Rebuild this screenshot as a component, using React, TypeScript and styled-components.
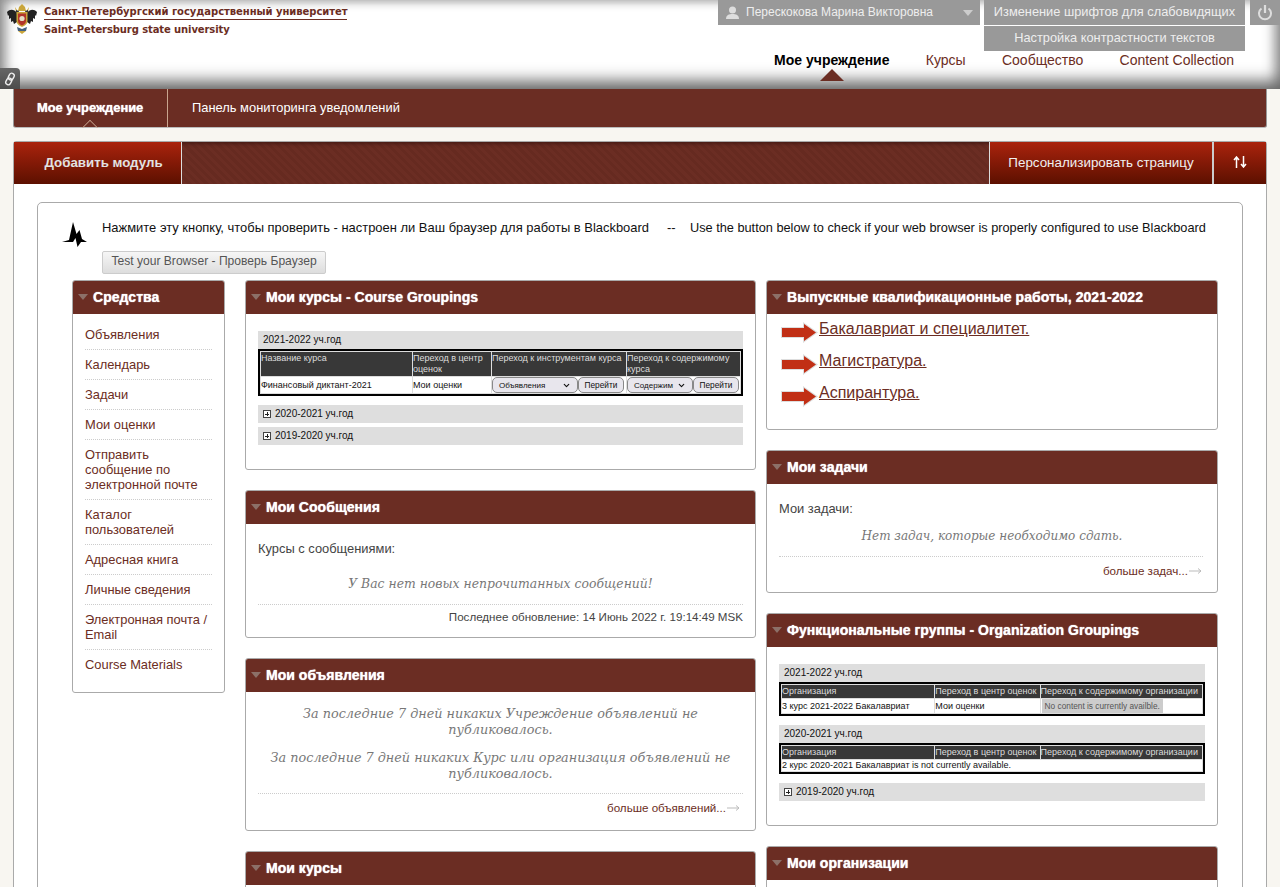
import React from 'react'
import styled, { createGlobalStyle } from 'styled-components'
import { ChevronDown } from 'lucide-react'

const GlobalStyle = createGlobalStyle`
  html, body {
    margin: 0;
    padding: 0;
    height: 887px;
    overflow: hidden;
    background-color: #eeebe4;
    font-family: "Liberation Sans", Arial, sans-serif;
  }

  * {
    box-sizing: border-box;
  }
`

const BRAND = '#6b2d23'

const Page = styled.div`
  width: 1280px;
  height: 887px;
  overflow: hidden;
  background-color: #eeebe4;
  background-image:
    linear-gradient(#f8f6f1, #f8f6f1),
    linear-gradient(#f8f6f1, #f8f6f1);
  background-size: 15px 15px;
  background-position: 3px 6px, 6px 3px;
  background-repeat: repeat;
`

const Header = styled.header`
  position: relative;
  height: 89px;
  display: flex;
  justify-content: space-between;
  background: #fff;
  box-shadow: inset 0 -16px 16px -8px #666, inset 14px 0 12px -8px #999, inset -14px 0 12px -8px #999, inset 0 8px 10px -6px #aaa;
`

const Brand = styled.div`
  display: flex;
  align-items: flex-start;
  padding: 3px 0 0 6px;
  gap: 6px;
`

const BrandText = styled.div`
  color: ${BRAND};
  font-family: "DejaVu Sans", sans-serif;
  font-weight: 700;
  font-size: 10px;
  white-space: nowrap;
  margin-top: 2px;
`

const BrandRu = styled.div`
  width: 303px;
  height: 15px;
  line-height: 11px;
  padding-top: 1px;
  border-bottom: 1px solid ${BRAND};
  letter-spacing: -0.04px;
`

const BrandEn = styled.div`
  line-height: 13px;
  padding-top: 3px;
  letter-spacing: -0.1px;
`

const HeaderRight = styled.div`
  display: flex;
  flex-direction: column;
  align-items: flex-end;
`

const TopRow = styled.div`
  display: flex;
`

const UserMenu = styled.div`
  width: 262px;
  height: 25px;
  background: #999;
  color: #eee;
  font-size: 12px;
  display: flex;
  align-items: center;
  padding: 0 7px;
  margin-right: 4px;
`

const UserName = styled.span`
  flex: 1;
  margin-left: 6px;
  margin-top: -2px;
`

const MenuArrow = styled.span`
  width: 0;
  height: 0;
  border-left: 5px solid transparent;
  border-right: 5px solid transparent;
  border-top: 6px solid #ccc;
`

const FontStack = styled.div`
  width: 261px;
  display: flex;
  flex-direction: column;
  gap: 1px;
`

const GreyButton = styled.div`
  height: 25px;
  background: #999;
  color: #eee;
  font-size: 12.8px;
  line-height: 24px;
  text-align: center;
`

const Power = styled.div`
  width: 30px;
  height: 25px;
  margin-left: 5px;
  background: #999;
  display: flex;
  justify-content: center;
  align-items: center;
`

const TopNav = styled.nav`
  display: flex;
  gap: 36.3px;
  padding: 1px 46px 0 0;
`

const NavLink = styled.a<{ $active?: boolean }>`
  position: relative;
  font-size: 14px;
  line-height: 17px;
  font-weight: ${(p) => (p.$active ? 700 : 400)};
  color: ${(p) => (p.$active ? '#000' : BRAND)};

  ${(p) =>
    p.$active &&
    `
    &::after {
      content: '';
      position: absolute;
      left: 46px;
      top: 17px;
      border-left: 12px solid transparent;
      border-right: 12px solid transparent;
      border-bottom: 12px solid ${BRAND};
    }
  `}
`

const LinkTab = styled.div`
  position: absolute;
  left: 0;
  bottom: 0;
  width: 20px;
  height: 21px;
  background: linear-gradient(#666, #4c4c4c);
  border-radius: 0 4px 0 0;
  display: flex;
  align-items: center;
  justify-content: center;
`

const SubNav = styled.div`
  margin: 0 13px;
  height: 39px;
  background: ${BRAND};
  border-left: 1px solid #999;
  border-right: 1px solid #999;
  border-bottom: 1px solid #bbb;
  display: flex;
  border-radius: 0 0 3px 3px;
`

const SubTab = styled.div<{ $active?: boolean }>`
  position: relative;
  height: 38px;
  line-height: 38px;
  padding: 0 24px 0 ${(p) => (p.$active ? '23px' : '24px')};
  color: #fff;
  font-size: 12.9px;
  white-space: nowrap;
  font-weight: ${(p) => (p.$active ? 700 : 400)};
  border-right: ${(p) => (p.$active ? '1px solid #c9a58f' : 'none')};
  ${(p) => p.$active && 'width: 154px; text-shadow: 0 0 1px #fff;'}

  ${(p) =>
    p.$active &&
    `
    &::after {
      content: '';
      position: absolute;
      left: 70px;
      bottom: -7px;
      width: 11px;
      height: 11px;
      border-left: 1px solid #c9a58f;
      border-top: 1px solid #c9a58f;
      transform: rotate(45deg);
      clip-path: polygon(0 0, 100% 0, 0 100%);
    }
  `}
`

const Panel = styled.div`
  margin: 13px 13px 0;
  border: 1px solid #aaa;
  border-radius: 3px 3px 0 0;
  background: #fff;
  height: 760px;
`

const ActionBar = styled.div`
  height: 42px;
  display: flex;
  justify-content: space-between;
  background: repeating-linear-gradient(45deg, #6b2d23 0 3px, #662a20 3px 6px);
  box-shadow: inset 0 4px 4px -3px #3a1510;
`

const RedButton = styled.div<{ $width: number }>`
  width: ${(p) => p.$width}px;
  height: 42px;
  padding-bottom: 2px;
  color: #f0f0f0;
  font-size: 13.4px;
  background: linear-gradient(#aa230d, #5c1000);
  display: flex;
  align-items: center;
  justify-content: center;
`

const AddButton = styled(RedButton)`
  border-right: 1px solid #ddd;
  font-size: 13.3px;
  font-weight: 700;
  color: #e2e2e2;
  padding-left: 12px;
`

const ActionRight = styled.div`
  display: flex;
`

const PersonalButton = styled(RedButton)`
  border-left: 1px solid #ddd;
`

const SortButton = styled(RedButton)`
  border-left: 2px solid #ccc;
`

const Content = styled.div`
  padding: 18px 23px 0;
`

const Box = styled.div`
  border: 1px solid #aaa;
  border-radius: 5px;
  height: 700px;
  padding: 0 24px 0 34px;
`

const Notice = styled.div`
  display: flex;
  gap: 14px;
  padding-top: 18px;
  margin-left: -10px;
`

const NoticeIcon = styled.div`
  padding-top: 1px;
  width: 26px;
`

const NoticeBody = styled.div`
  font-size: 12.95px;
  color: #111;
`

const NoticeText = styled.div`
  line-height: 14px;
  white-space: nowrap;
`

const NoticeEnglish = styled.span`
  font-size: 12.75px;
`

const TestButton = styled.div`
  margin-top: 16px;
  width: 224px;
  height: 23px;
  line-height: 19px;
  border: 1px solid #ccc;
  border-radius: 2px;
  background: linear-gradient(#f6f6f6, #ddd);
  color: #555;
  font-size: 12.1px;
  text-align: center;
`

const Columns = styled.div`
  display: flex;
  align-items: flex-start;
  margin-top: 6px;
`

const Column = styled.div<{ $width: number; $gap: number }>`
  width: ${(p) => p.$width}px;
  margin-right: ${(p) => p.$gap}px;
  display: flex;
  flex-direction: column;
  gap: 20px;
`

const Module = styled.section<{ $height: number }>`
  height: ${(p) => p.$height}px;
  border: 1px solid #aaa;
  border-radius: 3px;
  background: #fff;
  overflow: hidden;
`

const ModuleHead = styled.h2`
  margin: 0;
  height: 33px;
  background: ${BRAND};
  color: #fff;
  font-size: 14px;
  letter-spacing: 0.04px;
  display: flex;
  align-items: center;
  padding: 0 0 2px 5px;
  gap: 5px;
  white-space: nowrap;
  text-shadow: 0 0 1px #fff;
`

const HeadArrow = styled.span`
  width: 0;
  height: 0;
  margin-top: 1px;
  border-left: 5.5px solid transparent;
  border-right: 5.5px solid transparent;
  border-top: 6px solid #8c7068;
`

const ToolList = styled.div`
  padding-top: 6px;
`

const ToolItem = styled.a`
  display: block;
  margin: 0 12px;
  padding: 7px 0;
  font-size: 12.9px;
  line-height: 15px;
  color: ${BRAND};
  border-bottom: 1px dotted #ccc;

  &:last-child {
    border-bottom: 0;
  }
`

const ModuleBody = styled.div<{ $top: number; $side?: number }>`
  padding: ${(p) => p.$top}px ${(p) => p.$side ?? 12}px 0;
`

const YearBar = styled.div`
  height: 18px;
  line-height: 18px;
  background: #dedede;
  color: #111;
  font-size: 10px;
  padding-left: 5px;
  display: flex;
  align-items: center;
  gap: 4px;
`

const Plus = styled.span`
  width: 8px;
  height: 8px;
  border: 1px solid #444;
  background: linear-gradient(#222, #222) center / 4px 1px no-repeat, linear-gradient(#222, #222) center / 1px 4px no-repeat, #fff;
`

const SpacedYear = styled(YearBar)`
  margin-top: 9px;
`

const CollapsedYear = styled(YearBar)`
  margin-top: 4px;
`

const GroupTable = styled.table`
  width: 100%;
  table-layout: fixed;
  border-collapse: separate;
  border-spacing: 1px;
  border: 2px solid #000;
  background: #ddd;
  font-size: 9px;
  color: #111;

  th {
    background: #383838;
    color: #ddd;
    font-weight: 400;
    text-align: left;
    vertical-align: top;
    padding: 1px 0;
    line-height: 11px;
  }

  td {
    background: #fff;
    padding: 0;
    line-height: 11px;
    white-space: nowrap;
    overflow: hidden;
  }
`

const ControlCell = styled.div`
  display: flex;
`

const SelectBox = styled.span<{ $width: number }>`
  width: ${(p) => p.$width}px;
  height: 16px;
  border: 1px solid #888;
  border-radius: 5px;
  background: #e8e6ed;
  display: flex;
  align-items: center;
  justify-content: space-between;
  padding: 0 6px;
  font-size: 8px;
`

const GoButton = styled.span`
  width: 46px;
  height: 16px;
  border: 1px solid #888;
  border-radius: 5px;
  background: #e8e6ed;
  text-align: center;
  line-height: 14px;
  font-size: 8.3px;
`

const GreyNote = styled.span`
  display: inline-block;
  vertical-align: top;
  background: #ccc;
  color: #555;
  font-size: 8.3px;
  line-height: 14px;
  padding: 0 3px;
  margin-left: 1px;
`

const Label = styled.div`
  font-size: 12.9px;
  line-height: 15px;
  color: #444;
`

const EmptyText = styled.p<{ $size: number; $top?: number }>`
  margin: ${(p) => p.$top ?? 0}px 0 0;
  text-align: center;
  font-family: "DejaVu Serif", serif;
  font-style: italic;
  font-size: ${(p) => p.$size}px;
  line-height: 16px;
  color: #777;
`

const Footer = styled.div<{ $top?: number; $inset?: number; $end?: number }>`
  margin-top: ${(p) => p.$top ?? 12}px;
  margin-right: ${(p) => p.$inset ?? 0}px;
  padding: 4px ${(p) => p.$end ?? 0}px 0 0;
  border-top: 1px dotted #ccc;
  text-align: right;
`

const UpdateLine = styled(Footer)`
  font-size: 11.6px;
  line-height: 15px;
  color: #444;
`

const MoreLink = styled.a`
  display: inline-flex;
  align-items: center;
  color: ${BRAND};
  font-size: 11.6px;
  line-height: 15px;
`

const ArrowRow = styled.div`
  display: flex;
  align-items: flex-start;
  height: 32px;
`

const ArrowIcon = styled.div`
  margin: 2px 1px 0 14px;
  height: 21px;
`

const ArrowLink = styled.a`
  display: block;
  font-size: 16px;
  line-height: 18px;
  color: ${BRAND};
  text-decoration: underline;
`

const RedArrow = () => (
  <svg width="37" height="21" viewBox="0 0 37 21">
    <path d="M0 5h22V0l15 10.500L22 21v-5H0z" fill="#ddd" />
    <path d="M1 6h22V2l12 8.500L23 19v-4H1z" fill="#c12f15" />
  </svg>
)

const Emblem = () => (
  <svg width="32" height="32" viewBox="0 0 32 32">
    <path d="M12 8l1-4 3-3 3 3 1 4z" fill="#c9a53a" />
    <path d="M9 4l2 3-1 2zM23 4l-2 3 1 2z" fill="#c9a53a" />
    <path d="M11 10C8 6 4 6 1 9l1 4 1-1 0 4 2-1 0 4 2-1 1 3 3-2z" fill="#222" />
    <path d="M21 10c3-4 7-4 10-1l-1 4-1-1 0 4-2-1 0 4-2-1-1 3-3-2z" fill="#222" />
    <path d="M10 7l3 1-1 3h-2zM22 7l-3 1 1 3h2z" fill="#333" />
    <path d="M10.500 9h11v9c0 3-3 5-5.500 6-2.500-1-5.500-3-5.500-6z" fill="#c9a53a" />
    <path d="M12 10.500h8v7.500c0 2-2 3.500-4 4.500-2-1-4-2.500-4-4.500z" fill="#b3352a" />
    <circle cx="16" cy="15.500" r="2.600" fill="#e4dcc4" />
    <path d="M11 24l5 2 5-2-1 4h-8z" fill="#44607f" />
    <path d="M12 28h8l-4 3z" fill="#c9a53a" />
  </svg>
)

const PulseIcon = () => (
  <svg width="26" height="26" viewBox="0 0 26 26">
    <path d="M0 20l7-2L11 0l3.500 12L17.500 8 20 17l5 3h-6l-3.500 5-2-9L11 20z" fill="#000" />
  </svg>
)

const tools = [
  'Объявления',
  'Календарь',
  'Задачи',
  'Мои оценки',
  'Отправить сообщение по электронной почте',
  'Каталог пользователей',
  'Адресная книга',
  'Личные сведения',
  'Электронная почта / Email',
  'Course Materials',
]

const graduateLinks = ['Бакалавриат и специалитет.', 'Магистратура.', 'Аспирантура.']

const Title = ({ children }: { children: React.ReactNode }) => (
  <ModuleHead>
    <HeadArrow />
    {children}
  </ModuleHead>
)

const More = ({ label }: { label: string }) => (
  <MoreLink>
    {label}
    <svg width="14" height="8" viewBox="0 0 14 8">
      <path d="M1 4h12M10 1.500l3 2.500-3 2.500" fill="none" stroke="#bbb" />
    </svg>
  </MoreLink>
)

const OrgHead = () => (
  <>
    <colgroup>
      <col width="152" />
      <col width="104" />
      <col width="161" />
    </colgroup>
    <thead>
      <tr>
        <th>Организация</th>
        <th>Переход в центр оценок</th>
        <th>Переход к содержимому организации</th>
      </tr>
    </thead>
  </>
)

export default function App() {
  return (
    <Page>
      <GlobalStyle />
      <Header>
        <Brand>
          <Emblem />
          <BrandText>
            <BrandRu>Санкт-Петербургский государственный университет</BrandRu>
            <BrandEn>Saint-Petersburg state university</BrandEn>
          </BrandText>
        </Brand>
        <HeaderRight>
          <TopRow>
            <UserMenu>
              <svg width="15" height="15" viewBox="0 0 15 15">
                <circle cx="7.500" cy="5" r="3.500" fill="#ddd" />
                <path d="M1 14c0-4 3-5 6.500-5S14 10 14 14z" fill="#ddd" />
              </svg>
              <UserName>Перескокова Марина Викторовна</UserName>
              <MenuArrow />
            </UserMenu>
            <FontStack>
              <GreyButton>Изменение шрифтов для слабовидящих</GreyButton>
              <GreyButton>Настройка контрастности текстов</GreyButton>
            </FontStack>
            <Power>
              <svg width="16" height="18" viewBox="0 0 16 18">
                <path d="M4.500 4.500a6 6 0 1 0 7 0" fill="none" stroke="#ddd" strokeWidth="2" />
                <path d="M8 1v8" stroke="#ddd" strokeWidth="2.200" />
              </svg>
            </Power>
          </TopRow>
          <TopNav>
            <NavLink $active>Мое учреждение</NavLink>
            <NavLink>Курсы</NavLink>
            <NavLink>Сообщество</NavLink>
            <NavLink>Content Collection</NavLink>
          </TopNav>
        </HeaderRight>
        <LinkTab>
          <svg width="12" height="14" viewBox="0 0 12 14">
            <g fill="none" stroke="#eee" strokeWidth="1.400" transform="rotate(28 6 7)">
              <rect x="3.500" y="0.800" width="5" height="7" rx="2.500" />
              <rect x="3.500" y="6.200" width="5" height="7" rx="2.500" />
            </g>
          </svg>
        </LinkTab>
      </Header>
      <SubNav>
        <SubTab $active>Мое учреждение</SubTab>
        <SubTab>Панель мониторинга уведомлений</SubTab>
      </SubNav>
      <Panel>
        <ActionBar>
          <AddButton $width={168}>Добавить модуль</AddButton>
          <ActionRight>
            <PersonalButton $width={223}>Персонализировать страницу</PersonalButton>
            <SortButton $width={54}>
              <svg width="14" height="12" viewBox="0 0 14 12">
                <path d="M3.500 12V2M1 4l2.500-3L6 4M10.500 0v10M8 8l2.500 3L13 8" fill="none" stroke="#fff" strokeWidth="1.500" />
              </svg>
            </SortButton>
          </ActionRight>
        </ActionBar>
        <Content>
          <Box>
            <Notice>
              <NoticeIcon>
                <PulseIcon />
              </NoticeIcon>
              <NoticeBody>
                <NoticeText>
                  Нажмите эту кнопку, чтобы проверить - настроен ли Ваш браузер для работы в Blackboard &nbsp;&nbsp;&nbsp;&nbsp;-- &nbsp;&nbsp;&nbsp;
                  <NoticeEnglish>Use the button below to check if your web browser is properly configured to use Blackboard</NoticeEnglish>
                </NoticeText>
                <TestButton>Test your Browser - Проверь Браузер</TestButton>
              </NoticeBody>
            </Notice>
            <Columns>
              <Column $width={153} $gap={20}>
                <Module $height={413}>
                  <Title>Средства</Title>
                  <ToolList>
                    {tools.map((t) => (
                      <ToolItem key={t}>{t}</ToolItem>
                    ))}
                  </ToolList>
                </Module>
              </Column>
              <Column $width={511} $gap={10}>
                <Module $height={190}>
                  <Title>Мои курсы - Course Groupings</Title>
                  <ModuleBody $top={17}>
                    <YearBar>2021-2022 уч.год</YearBar>
                    <GroupTable>
                      <colgroup>
                        <col width="151" />
                        <col width="78" />
                        <col width="134" />
                        <col width="113" />
                      </colgroup>
                      <thead>
                        <tr>
                          <th>Название курса</th>
                          <th>Переход в центр оценок</th>
                          <th>Переход к инструментам курса</th>
                          <th>Переход к содержимому курса</th>
                        </tr>
                      </thead>
                      <tbody>
                        <tr>
                          <td>Финансовый диктант-2021</td>
                          <td>Мои оценки</td>
                          <td>
                            <ControlCell>
                              <SelectBox $width={86}>
                                Объявления
                                <ChevronDown size={9} strokeWidth={3} />
                              </SelectBox>
                              <GoButton>Перейти</GoButton>
                            </ControlCell>
                          </td>
                          <td>
                            <ControlCell>
                              <SelectBox $width={66}>
                                Содержим
                                <ChevronDown size={9} strokeWidth={3} />
                              </SelectBox>
                              <GoButton>Перейти</GoButton>
                            </ControlCell>
                          </td>
                        </tr>
                      </tbody>
                    </GroupTable>
                    <SpacedYear>
                      <Plus />
                      2020-2021 уч.год
                    </SpacedYear>
                    <CollapsedYear>
                      <Plus />
                      2019-2020 уч.год
                    </CollapsedYear>
                  </ModuleBody>
                </Module>
                <Module $height={148}>
                  <Title>Мои Сообщения</Title>
                  <ModuleBody $top={17}>
                    <Label>Курсы с сообщениями:</Label>
                    <EmptyText $size={12.4} $top={20}>
                      У Вас нет новых непрочитанных сообщений!
                    </EmptyText>
                    <UpdateLine>Последнее обновление: 14 Июнь 2022 г. 19:14:49 MSK</UpdateLine>
                  </ModuleBody>
                </Module>
                <Module $height={173}>
                  <Title>Мои объявления</Title>
                  <ModuleBody $top={14}>
                    <EmptyText $size={12.8}>За последние 7 дней никаких Учреждение объявлений не публиковалось.</EmptyText>
                    <EmptyText $size={12.8} $top={12}>
                      За последние 7 дней никаких Курс или организация объявлений не публиковалось.
                    </EmptyText>
                    <Footer $top={11} $end={3}>
                      <More label="больше объявлений..." />
                    </Footer>
                  </ModuleBody>
                </Module>
                <Module $height={120}>
                  <Title>Мои курсы</Title>
                </Module>
              </Column>
              <Column $width={452} $gap={0}>
                <Module $height={150}>
                  <Title>Выпускные квалификационные работы, 2021-2022</Title>
                  <ModuleBody $top={6} $side={0}>
                    {graduateLinks.map((t) => (
                      <ArrowRow key={t}>
                        <ArrowIcon>
                          <RedArrow />
                        </ArrowIcon>
                        <ArrowLink>{t}</ArrowLink>
                      </ArrowRow>
                    ))}
                  </ModuleBody>
                </Module>
                <Module $height={143}>
                  <Title>Мои задачи</Title>
                  <ModuleBody $top={17}>
                    <Label>Мои задачи:</Label>
                    <EmptyText $size={12} $top={12}>
                      Нет задач, которые необходимо сдать.
                    </EmptyText>
                    <Footer $inset={2} $end={1}>
                      <More label="больше задач..." />
                    </Footer>
                  </ModuleBody>
                </Module>
                <Module $height={213}>
                  <Title>Функциональные группы - Organization Groupings</Title>
                  <ModuleBody $top={17}>
                    <YearBar>2021-2022 уч.год</YearBar>
                    <GroupTable>
                      <OrgHead />
                      <tbody>
                        <tr>
                          <td>3 курс 2021-2022 Бакалавриат</td>
                          <td>Мои оценки</td>
                          <td>
                            <GreyNote>No content is currently availble.</GreyNote>
                          </td>
                        </tr>
                      </tbody>
                    </GroupTable>
                    <SpacedYear>2020-2021 уч.год</SpacedYear>
                    <GroupTable>
                      <OrgHead />
                      <tbody>
                        <tr>
                          <td colSpan={3}>2 курс 2020-2021 Бакалавриат is not currently available.</td>
                        </tr>
                      </tbody>
                    </GroupTable>
                    <SpacedYear>
                      <Plus />
                      2019-2020 уч.год
                    </SpacedYear>
                  </ModuleBody>
                </Module>
                <Module $height={120}>
                  <Title>Мои организации</Title>
                </Module>
              </Column>
            </Columns>
          </Box>
        </Content>
      </Panel>
    </Page>
  )
}
